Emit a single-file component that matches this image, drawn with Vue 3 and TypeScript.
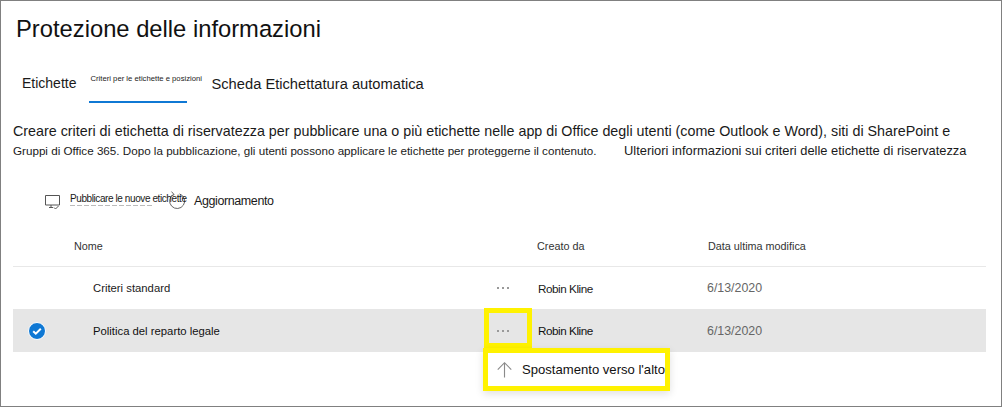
<script setup lang="ts">
interface Policy {
  name: string
  author: string
  modified: string
  selected: boolean
}

const policies: Policy[] = [
  { name: 'Criteri standard', author: 'Robin Kline', modified: '6/13/2020', selected: false },
  { name: 'Politica del reparto legale', author: 'Robin Kline', modified: '6/13/2020', selected: true },
]
</script>

<template>
  <div class="page">
    <h1 class="title">Protezione delle informazioni</h1>

    <nav class="tabs">
      <span class="tab">Etichette</span>
      <span class="tab tab-active">Criteri per le etichette e posizioni</span>
      <span class="tab tab-last">Scheda Etichettatura automatica</span>
    </nav>

    <p class="desc">
      Creare criteri di etichetta di riservatezza per pubblicare una o più etichette nelle app di Office degli utenti (come Outlook e Word), siti di SharePoint e
    </p>
    <p class="desc-second">
      <span class="desc-small">Gruppi di Office 365. Dopo la pubblicazione, gli utenti possono applicare le etichette per proteggerne il contenuto.</span>
      <span class="desc-link">Ulteriori informazioni sui criteri delle etichette di riservatezza</span>
    </p>

    <div class="toolbar">
      <svg class="icon-publish" width="17" height="15" viewBox="0 0 17 15" fill="none" stroke="#555" stroke-width="1">
        <path d="M1.5 .5h14v9.5h-14z" />
        <path d="M5 12.5h4M7 10v2.5" />
        <path d="M10 12.5l1.5 1.5 3-3" />
      </svg>
      <span class="publish-label">Pubblicare le nuove etichette</span>
      <svg class="icon-refresh" width="18" height="20" viewBox="0 0 18 20" fill="none" stroke="#666" stroke-width="1">
        <path d="M5.6 3.4A7.5 7.5 0 1 0 11.5 2.9" />
        <path d="M3.5 .6l2.6 3-3.4 1.8" />
      </svg>
      <span class="refresh-label">Aggiornamento</span>
    </div>

    <div class="table">
      <div class="head">
        <span></span>
        <span>Nome</span>
        <span>Creato da</span>
        <span>Data ultima modifica</span>
      </div>

      <div v-for="p in policies" :key="p.name" class="row" :class="{ selected: p.selected }">
        <span class="check-cell">
          <svg v-if="p.selected" width="18" height="18" viewBox="0 0 18 18">
            <circle cx="9" cy="9" r="8.5" fill="#0f78d4" stroke="#fff" />
            <path d="M5.2 9.2l2.6 2.5 5-5" fill="none" stroke="#fff" stroke-width="2" />
          </svg>
        </span>
        <span class="name">{{ p.name }}</span>
        <span class="more" :class="{ highlight: p.selected }">
          <i></i><i></i><i></i>
          <div v-if="p.selected" class="menu">
            <svg width="16" height="18" viewBox="0 0 16 18" fill="none" stroke="#8a8a8a" stroke-width="1.2">
              <path d="M8 17V1.5M.8 8.5L8 1.2l7.2 7.3" />
            </svg>
            <span>Spostamento verso l'alto</span>
          </div>
        </span>
        <span class="author">{{ p.author }}</span>
        <span class="date">{{ p.modified }}</span>
      </div>
    </div>
  </div>
</template>

<style>
html,
body {
  margin: 0;
  background: #fff;
}
</style>

<style scoped>
.page {
  box-sizing: border-box;
  width: 1002px;
  height: 407px;
  padding: 0 15px 0 12px;
  border: 1px solid #808080;
  font-family: 'Liberation Sans', Arial, sans-serif;
  color: #1a1a1a;
  background: #fff;
  overflow: hidden;
}

.title {
  margin: 14px 0 0 3px;
  font-size: 23.75px;
  line-height: 28px;
  font-weight: 400;
  color: #111;
}

.tabs {
  display: flex;
  margin-top: 20px;
  height: 40px;
}

.tab {
  padding: 11px 0 0 9px;
  font-size: 14px;
  line-height: 18px;
}

.tab-active {
  box-sizing: border-box;
  width: 98px;
  height: 40px;
  margin-left: 13px;
  padding: 10px 0 0 1px;
  border-bottom: 2px solid #0f78d4;
  font-size: 7.7px;
  line-height: 12px;
  white-space: nowrap;
}

.tab-last {
  padding-left: 24px;
  padding-top: 12px;
  font-size: 14.7px;
}

.desc {
  margin: 18px 0 0;
  font-size: 14.3px;
  line-height: 20px;
  white-space: nowrap;
}

.desc-second {
  display: flex;
  align-items: center;
  height: 19px;
  margin: 0;
  white-space: nowrap;
}

.desc-small {
  width: 611px;
  font-size: 11.65px;
}

.desc-link {
  font-size: 12.9px;
}

.toolbar {
  display: flex;
  align-items: center;
  height: 24px;
  margin: 29px 0 0 31px;
}

.icon-publish {
  flex: none;
  margin-top: 3px;
}

.publish-label {
  position: relative;
  width: 98px;
  margin: -6px 0 0 9px;
  font-size: 10px;
  letter-spacing: -0.41px;
  white-space: nowrap;
}

.publish-label::after {
  content: '';
  position: absolute;
  left: 0;
  top: 12px;
  width: 82px;
  height: 1px;
  background: repeating-linear-gradient(90deg, #bbb 0 5px, transparent 5px 7px);
}

.icon-refresh {
  flex: none;
}

.refresh-label {
  margin-left: 8px;
  font-size: 12.5px;
  letter-spacing: -0.4px;
}

.table {
  margin-top: 18px;
}

.head {
  display: grid;
  grid-template-columns: 61px 463px 171px 1fr;
  align-items: center;
  height: 29px;
  padding-bottom: 6px;
  border-bottom: 1px solid #e8e8e8;
  font-size: 10.8px;
  color: #333;
}

.row {
  display: grid;
  grid-template-columns: 80px 391px 48px 175px 1fr;
  align-items: center;
  height: 42px;
  font-size: 11.3px;
}

.selected {
  height: 43px;
  background: #e6e6e6;
  color: #111;
}

.check-cell {
  display: flex;
  padding-left: 15px;
}

.more {
  position: relative;
  display: flex;
  align-items: center;
  justify-content: center;
  gap: 3px;
  height: 100%;
  padding-right: 10px;
}

.more i {
  width: 2px;
  height: 1.5px;
  background: #999;
}

.highlight {
  box-sizing: border-box;
  align-self: start;
  height: 40px;
  margin-top: -1px;
  padding-top: 6px;
  border: 5px solid #fff200;
}

.menu {
  position: absolute;
  top: 35px;
  left: -6px;
  box-sizing: border-box;
  display: flex;
  align-items: center;
  gap: 10px;
  width: 187px;
  height: 43px;
  padding-left: 9px;
  border: 5px solid #fff200;
  background: #fff;
  box-shadow: 0 3px 8px rgba(0, 0, 0, 0.12);
  font-size: 13.1px;
  color: #111;
  white-space: nowrap;
}

.author {
  padding-left: 6px;
  font-size: 11.7px;
  letter-spacing: -0.45px;
}

.date {
  font-size: 12.4px;
  color: #666;
}
</style>
